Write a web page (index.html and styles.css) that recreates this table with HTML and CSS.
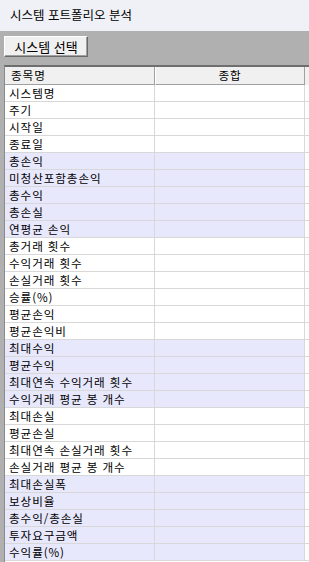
FILE: index.html
```html
<!DOCTYPE html>
<html lang="ko">
<head>
<meta charset="utf-8">
<link rel="stylesheet" href="styles.css">
</head>
<body>
<div class="title">시스템 포트폴리오 분석</div>
<div class="panel">
  <div class="toolbar"><button class="btn">시스템 선택</button></div>
  <div class="grid">
    <div class="row head">
      <div class="cell c1">종목명</div>
      <div class="cell c2">종합</div>
      <div class="cell c3"></div>
    </div>
    <div class="row"><div class="cell c1">시스템명</div><div class="cell c2"></div><div class="cell c3"></div></div>
    <div class="row"><div class="cell c1">주기</div><div class="cell c2"></div><div class="cell c3"></div></div>
    <div class="row"><div class="cell c1">시작일</div><div class="cell c2"></div><div class="cell c3"></div></div>
    <div class="row"><div class="cell c1">종료일</div><div class="cell c2"></div><div class="cell c3"></div></div>
    <div class="row alt"><div class="cell c1">총손익</div><div class="cell c2"></div><div class="cell c3"></div></div>
    <div class="row alt"><div class="cell c1">미청산포함총손익</div><div class="cell c2"></div><div class="cell c3"></div></div>
    <div class="row alt"><div class="cell c1">총수익</div><div class="cell c2"></div><div class="cell c3"></div></div>
    <div class="row alt"><div class="cell c1">총손실</div><div class="cell c2"></div><div class="cell c3"></div></div>
    <div class="row alt"><div class="cell c1">연평균 손익</div><div class="cell c2"></div><div class="cell c3"></div></div>
    <div class="row"><div class="cell c1">총거래 횟수</div><div class="cell c2"></div><div class="cell c3"></div></div>
    <div class="row"><div class="cell c1">수익거래 횟수</div><div class="cell c2"></div><div class="cell c3"></div></div>
    <div class="row"><div class="cell c1">손실거래 횟수</div><div class="cell c2"></div><div class="cell c3"></div></div>
    <div class="row"><div class="cell c1">승률(%)</div><div class="cell c2"></div><div class="cell c3"></div></div>
    <div class="row"><div class="cell c1">평균손익</div><div class="cell c2"></div><div class="cell c3"></div></div>
    <div class="row"><div class="cell c1">평균손익비</div><div class="cell c2"></div><div class="cell c3"></div></div>
    <div class="row alt"><div class="cell c1">최대수익</div><div class="cell c2"></div><div class="cell c3"></div></div>
    <div class="row alt"><div class="cell c1">평균수익</div><div class="cell c2"></div><div class="cell c3"></div></div>
    <div class="row alt"><div class="cell c1">최대연속 수익거래 횟수</div><div class="cell c2"></div><div class="cell c3"></div></div>
    <div class="row alt"><div class="cell c1">수익거래 평균 봉 개수</div><div class="cell c2"></div><div class="cell c3"></div></div>
    <div class="row"><div class="cell c1">최대손실</div><div class="cell c2"></div><div class="cell c3"></div></div>
    <div class="row"><div class="cell c1">평균손실</div><div class="cell c2"></div><div class="cell c3"></div></div>
    <div class="row"><div class="cell c1">최대연속 손실거래 횟수</div><div class="cell c2"></div><div class="cell c3"></div></div>
    <div class="row"><div class="cell c1">손실거래 평균 봉 개수</div><div class="cell c2"></div><div class="cell c3"></div></div>
    <div class="row alt"><div class="cell c1">최대손실폭</div><div class="cell c2"></div><div class="cell c3"></div></div>
    <div class="row alt"><div class="cell c1">보상비율</div><div class="cell c2"></div><div class="cell c3"></div></div>
    <div class="row alt"><div class="cell c1">총수익/총손실</div><div class="cell c2"></div><div class="cell c3"></div></div>
    <div class="row alt"><div class="cell c1">투자요구금액</div><div class="cell c2"></div><div class="cell c3"></div></div>
    <div class="row alt"><div class="cell c1">수익률(%)</div><div class="cell c2"></div><div class="cell c3"></div></div>
  </div>
</div>
</body>
</html>
```
FILE: styles.css
```css
html, body {
  margin: 0;
  padding: 0;
  height: 100%;
  overflow: hidden;
}
body {
  font-family: "Noto Sans CJK KR", "Noto Sans", sans-serif;
  font-size: 11.6px;
  letter-spacing: 0.9px;
  color: #000;
  background: #b0b0b0;
}
.title {
  height: 31px;
  line-height: 30px;
  padding-left: 10px;
  background: #f0f1f6;
  font-size: 12.5px;
  letter-spacing: 0;
}
.panel {
  background: #b0b0b0;
  padding-left: 4px;
  height: 531px;
}
.toolbar {
  height: 34px;
  padding-top: 5px;
  box-sizing: border-box;
}
.btn {
  font-family: inherit;
  font-size: 13px;
  letter-spacing: 0;
  height: 21px;
  width: 84px;
  padding: 0;
  margin: 0;
  line-height: 17px;
  background: #f0f0f0;
  color: #000;
  border: 1px solid;
  border-color: #ffffff #6a6a6a #6a6a6a #ffffff;
  box-shadow: inset -1px -1px 0 #a0a0a0;
}
.grid {
  border-top: 2px solid #6e6e6e;
  border-left: 1px solid #8a8a8a;
  background: #ffffff;
  height: 495px;
}
.row {
  display: grid;
  grid-template-columns: 150px 150px 1fr;
  height: 17px;
}
.cell {
  box-sizing: border-box;
  height: 17px;
  line-height: 16px;
  border-bottom: 1px solid #d8d8d8;
  padding-left: 4px;
  white-space: nowrap;
}
.c1, .c2 {
  border-right: 1px solid #d8d8d8;
}
.c3 {
  background: #ffffff;
}
.alt .c1, .alt .c2 {
  background: #e8e8fc;
}
.head {
  height: 18px;
}
.head .cell {
  height: 18px;
  line-height: 17px;
  background: #f0f0f0;
  border-bottom: 1px solid #a0a0a0;
  border-right: 1px solid #a0a0a0;
}
.head .c2 {
  text-align: center;
  padding-left: 0;
  border-left: 1px solid #ffffff;
}
.head .c1 {
  padding-left: 6px;
}
.head .c3 {
  border-right: none;
  border-bottom: none;
}
```
